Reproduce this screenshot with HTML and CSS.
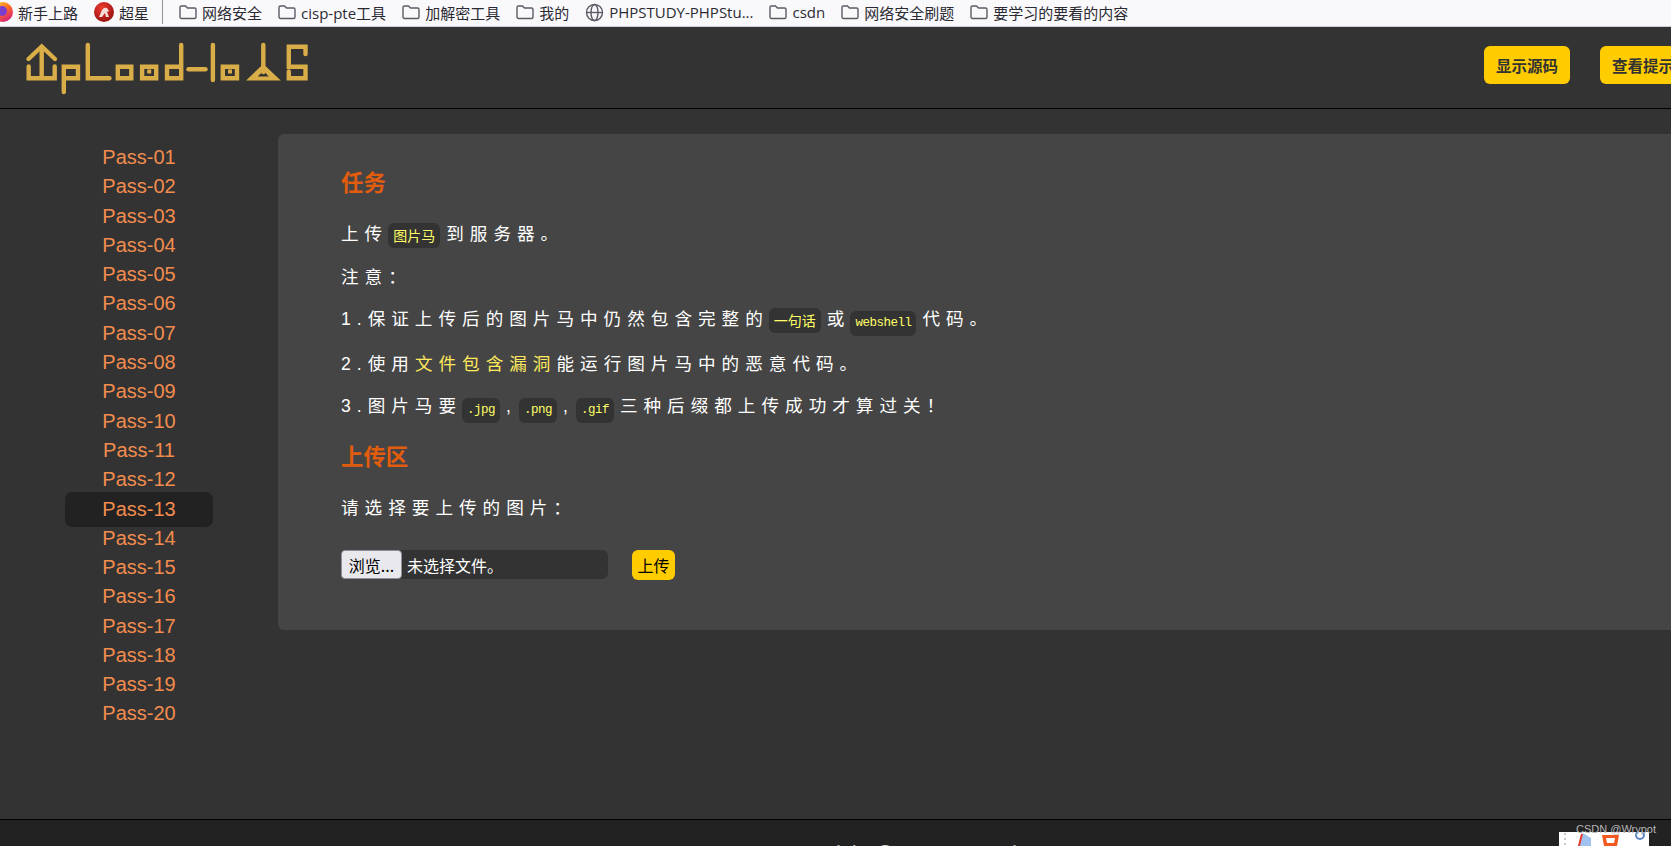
FILE: index.html
```html
<!DOCTYPE html>
<html lang="en">
<head>
  <meta charset="UTF-8" />
  <title>Upload-labs</title>
  <link rel="stylesheet" href="styles.css">
</head>
<body>
  <!-- Browser bookmarks -->
  <div class="bookmarks">
    <span class="mark mark-first">
      <svg class="icon-fox" width="20" height="20" viewBox="0 0 20 20">
        <defs>
          <linearGradient id="fox" x1="0" y1="0" x2="0.6" y2="1">
            <stop offset="0" stop-color="#ffcf30" />
            <stop offset="0.55" stop-color="#ff6a25" />
            <stop offset="1" stop-color="#d9247a" />
          </linearGradient>
        </defs>
        <circle cx="10" cy="10" r="10" fill="url(#fox)" />
        <circle cx="9" cy="9" r="5" fill="#7b3fd0" />
      </svg>
      新手上路
    </span>
    <span class="mark mark-cx">
      <svg width="20" height="20" viewBox="0 0 20 20">
        <defs>
          <radialGradient id="cx" cx="0.4" cy="0.3" r="0.8">
            <stop offset="0" stop-color="#ee3b30" />
            <stop offset="1" stop-color="#8e0c0c" />
          </radialGradient>
        </defs>
        <circle cx="10" cy="10" r="10" fill="url(#cx)" />
        <path d="M5 15 L8 8 Q10 5 13 6 L15 9 L13 10 L15 15 L12 15 L11 11 L8 15 Z" fill="#f6dcd6" />
      </svg>
      超星
    </span>
    <span class="divider"></span>
    <span class="mark"><svg class="folder" width="18" height="16" viewBox="0 0 18 16"><path d="M1 3.5A1.5 1.5 0 0 1 2.500 2H6.500L8.500 4H15.500A1.500 1.500 0 0 1 17 5.500V13A1.500 1.500 0 0 1 15.500 14.500H2.500A1.500 1.500 0 0 1 1 13Z" /></svg>网络安全</span>
    <span class="mark"><svg class="folder" width="18" height="16" viewBox="0 0 18 16"><path d="M1 3.5A1.5 1.5 0 0 1 2.500 2H6.500L8.500 4H15.500A1.500 1.500 0 0 1 17 5.500V13A1.500 1.500 0 0 1 15.500 14.500H2.500A1.500 1.500 0 0 1 1 13Z" /></svg>cisp-pte工具</span>
    <span class="mark"><svg class="folder" width="18" height="16" viewBox="0 0 18 16"><path d="M1 3.5A1.5 1.5 0 0 1 2.500 2H6.500L8.500 4H15.500A1.500 1.500 0 0 1 17 5.500V13A1.500 1.500 0 0 1 15.500 14.500H2.500A1.500 1.500 0 0 1 1 13Z" /></svg>加解密工具</span>
    <span class="mark"><svg class="folder" width="18" height="16" viewBox="0 0 18 16"><path d="M1 3.5A1.5 1.5 0 0 1 2.500 2H6.500L8.500 4H15.500A1.500 1.500 0 0 1 17 5.500V13A1.500 1.500 0 0 1 15.500 14.500H2.500A1.500 1.500 0 0 1 1 13Z" /></svg>我的</span>
    <span class="mark"><svg class="folder" width="19" height="19" viewBox="0 0 19 19"><circle cx="9.500" cy="9.500" r="8" /><ellipse cx="9.500" cy="9.500" rx="3.500" ry="8" /><path d="M1.500 9.500H17.500" /></svg>PHPSTUDY-PHPStu...</span>
    <span class="mark"><svg class="folder" width="18" height="16" viewBox="0 0 18 16"><path d="M1 3.5A1.5 1.5 0 0 1 2.500 2H6.500L8.500 4H15.500A1.500 1.500 0 0 1 17 5.500V13A1.500 1.500 0 0 1 15.500 14.500H2.500A1.500 1.500 0 0 1 1 13Z" /></svg>csdn</span>
    <span class="mark"><svg class="folder" width="18" height="16" viewBox="0 0 18 16"><path d="M1 3.5A1.5 1.5 0 0 1 2.500 2H6.500L8.500 4H15.500A1.500 1.500 0 0 1 17 5.500V13A1.500 1.500 0 0 1 15.500 14.500H2.500A1.500 1.500 0 0 1 1 13Z" /></svg>网络安全刷题</span>
    <span class="mark"><svg class="folder" width="18" height="16" viewBox="0 0 18 16"><path d="M1 3.5A1.5 1.5 0 0 1 2.500 2H6.500L8.500 4H15.500A1.500 1.500 0 0 1 17 5.500V13A1.500 1.500 0 0 1 15.500 14.500H2.500A1.500 1.500 0 0 1 1 13Z" /></svg>要学习的要看的内容</span>
  </div>

  <div class="page">
    <!-- Header -->
    <div class="header">
      <svg class="logo" width="290" height="56" viewBox="24 42 290 56" role="img" aria-label="Upload-labs">
        <g class="logo-lines">
          <path d="M28.500 59 L41.700 46.500 L55 59" />
          <path d="M41.700 47V78" />
          <path d="M28.700 66.500V78.200H54.700V66.500" />
          <path d="M63.800 92V66.800H78V78.200H63.800" />
          <path d="M87.800 45V78.200H109.500" />
          <path d="M117.800 66.800H131.300V78.200H117.800Z" />
          <path d="M142.100 66.800H156.200V78.200H142.100Z" />
          <path d="M181.200 45V78.200H167V66.800H181.200" />
          <path d="M188.500 69.200H205.500" />
          <path d="M212.900 45V80" />
          <path d="M222.800 66.800H237V78.200H222.800Z" />
          <path d="M263.300 45V72" />
          <path d="M309 0" />
          <path d="M305.500 54V46.800H288.800V66.800H305.500V78.200H288.800V71.500" />
        </g>
        <rect class="logo-fill" x="147.200" y="69.500" width="4" height="4" />
        <rect class="logo-fill" x="228" y="69.500" width="4" height="4" />
        <path class="logo-fill" fill-rule="evenodd" d="M263.300 64 L280.800 80.400H246Z M263.300 70.800 L257.800 76.400H268.800Z" />
      </svg>
      <div class="head-btns">
        <button class="btn-head">显示源码</button>
        <button class="btn-head">查看提示</button>
      </div>
    </div>

    <div class="main">
      <!-- Left menu -->
      <ul class="menu">
        <li><a>Pass-01</a></li>
        <li><a>Pass-02</a></li>
        <li><a>Pass-03</a></li>
        <li><a>Pass-04</a></li>
        <li><a>Pass-05</a></li>
        <li><a>Pass-06</a></li>
        <li><a>Pass-07</a></li>
        <li><a>Pass-08</a></li>
        <li><a>Pass-09</a></li>
        <li><a>Pass-10</a></li>
        <li><a>Pass-11</a></li>
        <li><a>Pass-12</a></li>
        <li class="active"><a>Pass-13</a></li>
        <li><a>Pass-14</a></li>
        <li><a>Pass-15</a></li>
        <li><a>Pass-16</a></li>
        <li><a>Pass-17</a></li>
        <li><a>Pass-18</a></li>
        <li><a>Pass-19</a></li>
        <li><a>Pass-20</a></li>
      </ul>

      <!-- Task panel -->
      <div class="panel">
        <h2>任务</h2>
        <p>上传<code>图片马</code>到服务器。</p>
        <p>注意：</p>
        <p>1.保证上传后的图片马中仍然包含完整的<code>一句话</code>或<code class="latin">webshell</code>代码。</p>
        <p>2.使用<span class="hl">文件包含漏洞</span>能运行图片马中的恶意代码。</p>
        <p>3.图片马要<code class="latin">.jpg</code>,<code class="latin comma">.png</code>,<code class="latin comma">.gif</code>三种后缀都上传成功才算过关！</p>
        <h2 class="h-upload">上传区</h2>
        <p>请选择要上传的图片：</p>
        <form class="upload-row">
          <div class="file-box">
            <button type="button" class="browse">浏览...</button>
            <span class="file-name">未选择文件。</span>
          </div>
          <button type="button" class="btn-upload">上传</button>
        </form>
      </div>
    </div>

    <!-- Footer -->
    <div class="footer">Copyright @ 2018 - 2020 by <span class="author">c0ny1</span></div>
  </div>

  <!-- Watermark and the corner of a toolbar lying over the page -->
  <div class="stamp">
    <svg width="90" height="14" viewBox="0 0 90 14">
      <path d="M6 1V14" stroke="#c8c8c8" stroke-width="2" stroke-dasharray="2 3" />
      <path d="M19 14L24 1L32 6V14Z" fill="#9fc3ee" />
      <path d="M20 14L23 2" stroke="#e23b2e" stroke-width="2" fill="none" />
      <path d="M43 3H60L58 14H45Z M47 6L48 11H55L56 6Z" fill="#f2591f" fill-rule="evenodd" />
      <circle cx="81" cy="3" r="4" fill="none" stroke="#5b86c9" stroke-width="2" />
    </svg>
  </div>
  <div class="watermark">CSDN @Wrypot</div>
</body>
</html>
```

FILE: styles.css
```css
* {
  margin: 0;
  padding: 0;
  box-sizing: border-box;
}

body {
  width: 100vw;
  height: 100vh;
  overflow: hidden;
  position: relative;
  background: #333;
  font-family: 'Liberation Sans', 'Noto Sans CJK SC', sans-serif;
}

/* Bookmarks */
.bookmarks {
  height: 27px;
  background: #f9f9fb;
  border-bottom: 1px solid #cfcfd8;
  display: flex;
  align-items: center;
  gap: 16px;
  padding-bottom: 2px;
  overflow: hidden;
  font-family: 'Open Sans', 'Noto Sans CJK SC', sans-serif;
  font-size: 15px;
  color: #2b2a33;
  white-space: nowrap;
}

.mark {
  display: flex;
  align-items: center;
  gap: 5px;
}

.mark-first {
  margin-left: -7px;
}

.mark-cx {
  margin-left: 0;
}

.divider {
  width: 1px;
  height: 24px;
  background: #8f8f9d;
  margin-left: -3px;
}

.folder {
  fill: none;
  stroke: #5b5b66;
  stroke-width: 1.4;
}

/* Page */
.page {
  width: 1720px;
}

.header {
  height: 82px;
  border-bottom: 1px solid #000;
  display: flex;
  align-items: flex-start;
  justify-content: space-between;
  padding: 15px 34px 0 24px;
}

.logo-lines {
  fill: none;
  stroke: #d9ad47;
  stroke-width: 4.4;
  stroke-linecap: round;
}

.logo-fill {
  fill: #d9ad47;
}

.head-btns {
  display: flex;
  gap: 30px;
  padding-top: 4px;
}

.btn-head {
  width: 86px;
  height: 38px;
  background: #fc0;
  border: none;
  border-radius: 6px;
  color: #333;
  font-family: 'Noto Sans CJK SC', sans-serif;
  font-size: 15.500px;
  font-weight: bold;
}

.main {
  height: 710px;
  display: flex;
}

/* Menu */
.menu {
  list-style: none;
  width: 278px;
  padding: 34px 0 0 65px;
  font-size: 20px;
  line-height: 29.280px;
}

.menu li {
  width: 148px;
  text-align: center;
  color: #f28c4e;
}

.menu li a {
  display: block;
}

.menu li.active a {
  margin: -2px 0 -3px;
  padding: 3px 0 2px;
  background: #222;
  border-radius: 7px;
}

.menu li.active {
  position: relative;
}

/* Panel */
.panel {
  flex: 1;
  align-self: flex-start;
  margin-top: 25px;
  padding: 35px 63px 50px;
  background: #454545;
  border-radius: 6px;
  color: #fff;
}

h2 {
  font-size: 22.400px;
  line-height: 30px;
  color: #e25c0e;
  margin-bottom: 20px;
}

.h-upload {
  margin-top: 20px;
}

p {
  font-size: 17.600px;
  line-height: 30px;
  letter-spacing: 6px;
  margin-bottom: 12.600px;
  white-space: nowrap;
}

code {
  display: inline-block;
  height: 25px;
  line-height: 25px;
  padding: 0 5px;
  margin-right: 6px;
  background: #333;
  border-radius: 6px;
  color: #ff6;
  font-family: 'Noto Sans CJK SC', sans-serif;
  font-size: 14px;
  letter-spacing: 0;
  vertical-align: -1px;
}

code.latin {
  font-family: 'Liberation Mono', monospace;
  font-size: 12.500px;
  letter-spacing: -0.500px;
}

code.comma {
  margin-left: 2px;
}

.hl {
  color: #ffe95c;
}

/* Upload form */
.upload-row {
  display: flex;
  align-items: flex-start;
  gap: 24px;
  margin-top: 27px;
}

.file-box {
  width: 267px;
  height: 29px;
  display: flex;
  align-items: center;
  gap: 5px;
  background: #333;
  border-radius: 6px;
  font-size: 16px;
  color: #fff;
}

.browse {
  width: 61px;
  height: 29px;
  background: #e9e9ed;
  border: 1px solid #8f8f9d;
  border-radius: 4px;
  color: #000;
  font-family: 'Noto Sans CJK SC', sans-serif;
  font-size: 16px;
}

.btn-upload {
  width: 43px;
  height: 30px;
  background: #fc0;
  border: none;
  border-radius: 6px;
  color: #000;
  font-family: 'Noto Sans CJK SC', sans-serif;
  font-size: 16px;
}

/* Footer */
.footer {
  height: 40px;
  background: #222;
  border-top: 1px solid #000;
  padding: 21px 0 0 783px;
  color: #ccc;
  font-size: 20px;
  line-height: 24px;
  white-space: nowrap;
}

.author {
  color: #a00;
}

/* Overlays */
.stamp {
  position: absolute;
  left: 1559px;
  top: 832px;
  width: 90px;
  height: 14px;
  background: #fff;
}

.watermark {
  position: absolute;
  left: 1576px;
  top: 822px;
  font-size: 11px;
  line-height: 14px;
  color: #b5b5b5;
}
```
